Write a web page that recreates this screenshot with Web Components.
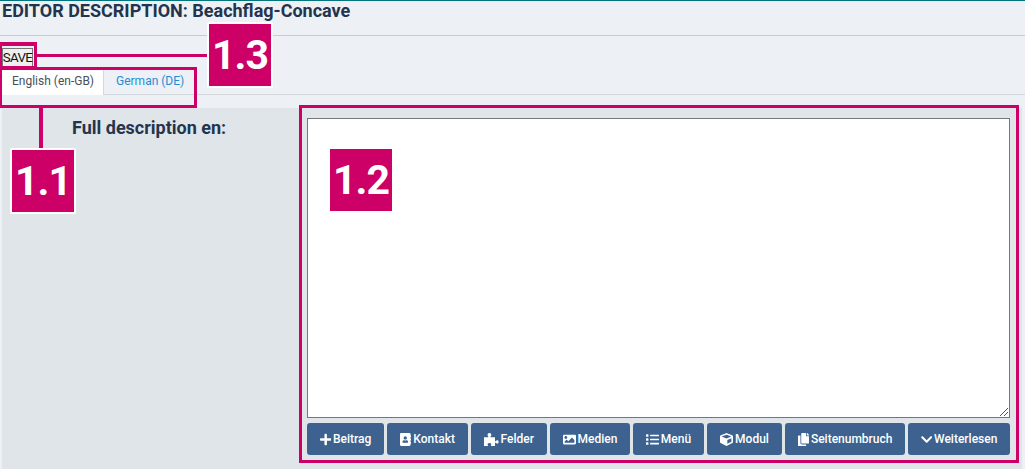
<!DOCTYPE html>
<html>
<head>
<meta charset="utf-8">
<style>
  html, body { margin: 0; height: 469px; overflow: hidden; }
  body { background: #edf1f6; font-family: Roboto, "Liberation Sans", sans-serif; color: #24344d; }
</style>
</head>
<body>
<description-editor>
  <editor-tabs slot="tabs"></editor-tabs>
</description-editor>

<script>
const ICONS = {
  plus: [448, 'M416 208H272V64c0-17.670-14.330-32-32-32h-32c-17.670 0-32 14.330-32 32v144H32c-17.670 0-32 14.330-32 32v32c0 17.670 14.330 32 32 32h144v144c0 17.670 14.330 32 32 32h32c17.670 0 32-14.330 32-32V304h144c17.670 0 32-14.330 32-32v-32c0-17.670-14.330-32-32-32z'],
  contact: [448, 'M436 160c6.600 0 12-5.400 12-12v-40c0-6.600-5.400-12-12-12h-20V48c0-26.500-21.500-48-48-48H48C21.500 0 0 21.500 0 48v416c0 26.500 21.500 48 48 48h320c26.500 0 48-21.500 48-48v-48h20c6.600 0 12-5.400 12-12v-40c0-6.600-5.400-12-12-12h-20v-64h20c6.600 0 12-5.400 12-12v-40c0-6.600-5.400-12-12-12h-20v-64h20zm-228-32c35.300 0 64 28.700 64 64s-28.700 64-64 64-64-28.700-64-64 28.700-64 64-64zm112 236.800c0 10.600-10 19.200-22.400 19.200H118.400C106 384 96 375.400 96 364.800v-19.200c0-31.800 30.100-57.600 67.200-57.600h5c12.300 5.100 25.700 8 39.800 8s27.600-2.900 39.800-8h5c37.100 0 67.200 25.800 67.200 57.600v19.200z'],
  puzzle: [576, 'M0 170H150C190 170 170 130 150 105C120 60 150 0 215 0C280 0 310 60 280 105C260 130 240 170 280 170H432V300C432 340 470 320 490 300C530 270 576 300 576 350C576 400 530 430 490 400C470 380 432 360 432 400V512H300C260 512 270 470 285 450C305 420 280 390 215 390C150 390 125 420 145 450C160 470 170 512 130 512H0Z'],
  image: [512, 'M464 448H48c-26.510 0-48-21.490-48-48V112c0-26.510 21.490-48 48-48h416c26.510 0 48 21.490 48 48v288c0 26.510-21.490 48-48 48zM112 120c-30.928 0-56 25.072-56 56s25.072 56 56 56 56-25.072 56-56-25.072-56-56-56zM64 384h384V272l-87.515-87.515c-4.686-4.686-12.284-4.686-16.971 0L208 320l-55.515-55.515c-4.686-4.686-12.284-4.686-16.971 0L64 336v48z'],
  list: [512, 'M80 368H16a16 16 0 0 0-16 16v64a16 16 0 0 0 16 16h64a16 16 0 0 0 16-16v-64a16 16 0 0 0-16-16zm0-320H16A16 16 0 0 0 0 64v64a16 16 0 0 0 16 16h64a16 16 0 0 0 16-16V64a16 16 0 0 0-16-16zm0 160H16a16 16 0 0 0-16 16v64a16 16 0 0 0 16 16h64a16 16 0 0 0 16-16v-64a16 16 0 0 0-16-16zm416 176H176a16 16 0 0 0-16 16v32a16 16 0 0 0 16 16h320a16 16 0 0 0 16-16v-32a16 16 0 0 0-16-16zm0-320H176a16 16 0 0 0-16 16v32a16 16 0 0 0 16 16h320a16 16 0 0 0 16-16V80a16 16 0 0 0-16-16zm0 160H176a16 16 0 0 0-16 16v32a16 16 0 0 0 16 16h320a16 16 0 0 0 16-16v-32a16 16 0 0 0-16-16z'],
  cube: [512, 'M239.100 6.300l-208 78c-18.700 7-31.100 25-31.100 45v225.100c0 18.200 10.300 34.800 26.500 42.900l208 104c13.500 6.800 29.400 6.800 42.900 0l208-104c16.300-8.100 26.500-24.800 26.500-42.900V129.300c0-20-12.400-37.900-31.100-44.900l-208-78C262 2.200 250 2.200 239.100 6.300zM256 68.400l192 72v1.100l-192 78-192-78v-1.100l192-72zm32 356V275.500l160-65v133.900l-160 80z'],
  copies: [448, 'M320 448v40c0 13.255-10.745 24-24 24H24c-13.255 0-24-10.745-24-24V120c0-13.255 10.745-24 24-24h72v296c0 30.879 25.121 56 56 56h168zm0-344V0H152c-13.255 0-24 10.745-24 24v368c0 13.255 10.745 24 24 24h272c13.255 0 24-10.745 24-24V128H344c-13.200 0-24-10.800-24-24zm120.971-31.029L375.029 7.029A24 24 0 0 0 358.059 0H352v96h96v-6.059a24 24 0 0 0-7.029-16.970z'],
  chevron: [448, 'M207.029 381.476L12.686 187.132c-9.373-9.373-9.373-24.569 0-33.941l22.667-22.667c9.357-9.357 24.522-9.375 33.901-.04L224 284.505l154.745-154.021c9.379-9.335 24.544-9.317 33.901.04l22.667 22.667c9.373 9.373 9.373 24.569 0 33.941L240.971 381.476c-9.373 9.372-24.569 9.372-33.942 0z']
};

class CalloutTag extends HTMLElement {
  constructor() {
    super();
    this.root = this.attachShadow({ mode: 'open' });
    this.root.innerHTML = `
    <style>
      :host {
        display: flex;
        align-items: center;
        justify-content: center;
        box-sizing: border-box;
        width: var(--tag-w, 66px);
        height: var(--tag-h, 66px);
        background: #cc0066;
        color: #fff;
        font: 700 41px/1 Roboto, "Liberation Sans", sans-serif;
        letter-spacing: -1px;
        border: 2px solid var(--tag-edge, #fff);
        border-radius: var(--tag-radius, 2px);
      }
    </style>
    <slot></slot>
    `;
  }
}

class ToolButton extends HTMLElement {
  constructor() {
    super();
    this.root = this.attachShadow({ mode: 'open' });
  }

  connectedCallback() {
    const [w, d] = ICONS[this.getAttribute('icon')];
    this.root.innerHTML = `
    <style>
      :host {
        display: flex;
        align-items: center;
        justify-content: center;
        gap: 2px;
        box-sizing: border-box;
        height: 32px;
        background: #3d6290;
        border-radius: 3px;
        color: #fff;
        font: 500 12px/1 Roboto, "Liberation Sans", sans-serif;
      }
      svg { fill: #fff; flex: none; }
    </style>
    <svg viewBox="0 0 ${w} 512" width="${w * 13 / 512}" height="13"><path d="${d}"/></svg><slot></slot>
    `;
  }
}

class EditorTabs extends HTMLElement {
  constructor() {
    super();
    this.root = this.attachShadow({ mode: 'open' });
    this.root.innerHTML = `
    <style>
      :host {
        display: flex;
        height: 27px;
        box-sizing: border-box;
        border-bottom: 1px solid #d5d9de;
        font: 12px/1 Roboto, "Liberation Sans", sans-serif;
      }
      .tab { display: flex; align-items: center; box-sizing: border-box; height: 26px; }
      .on { width: 104px; height: 27px; padding: 0 0 1px 12px; background: #fff; color: #495057; border-right: 1px solid #d5d9de; }
      .off { padding: 0 0 0 12px; color: #1f8dd6; }
    </style>
    <div class="tab on">English (en-GB)</div>
    <div class="tab off">German (DE)</div>
    `;
  }
}

class DescriptionEditor extends HTMLElement {
  constructor() {
    super();
    this.root = this.attachShadow({ mode: 'open' });
    this.root.innerHTML = `
    <style>
      :host { display: block; position: relative; height: 469px; overflow: hidden; }
      .topline { height: 1px; background: #00757d; }
      h1 {
        margin: 0;
        height: 35px;
        box-sizing: border-box;
        padding: 0 0 0 2px;
        border-bottom: 1px solid #c8ccd0;
        font: 700 18px/20px Roboto, "Liberation Sans", sans-serif;
        color: #24344d;
      }
      .savebar { padding: 12px 0 0 2px; height: 32px; box-sizing: border-box; }
      .save {
        display: flex;
        align-items: center;
        justify-content: center;
        box-sizing: border-box;
        height: 19px;
        width: 31px;
        background: #efefef;
        border: 1px solid #767676;
        font: 13.333px/1 Roboto, "Liberation Sans", sans-serif;
        letter-spacing: -.6px;
        color: #111;
      }
      .tabs { height: 40px; }
      .body {
        display: grid;
        grid-template-columns: 298px 1fr;
        height: 361px;
        width: 1020px;
        background: #e0e5ea;
        margin-left: 2px;
      }
      label {
        display: block;
        padding: 10px 0 0 70px;
        font: 700 18px/20px Roboto, "Liberation Sans", sans-serif;
      }
      .form { padding: 10px 12px 0 7px; }
      .area {
        height: 300px;
        box-sizing: border-box;
        background: #fff;
        border: 1px solid #767676;
        position: relative;
      }
      .grip { position: absolute; right: 1px; bottom: 1px; width: 9px; height: 9px; }
      .tools {
        display: grid;
        grid-template-columns: 77px 81px 76px 80px 71px 75px 120px 102px;
        gap: 3px;
        margin-top: 5px;
      }
      .frame { position: absolute; box-sizing: border-box; border: 3px solid #cc0066; }
      .bar { position: absolute; background: #cc0066; }
      callout-tag { position: absolute; }
    </style>
    <div class="topline"></div>
    <h1>EDITOR DESCRIPTION: Beachflag-Concave</h1>
    <div class="savebar"><div class="save">SAVE</div></div>
    <div class="tabs"><slot name="tabs"></slot></div>
    <div class="body">
      <label>Full description en:</label>
      <div class="form">
        <div class="area">
          <svg class="grip" viewBox="0 0 9 9" fill="none" stroke="#555" stroke-width="1"><path d="M1 9 9 1M5 9l4-4"/></svg>
        </div>
        <div class="tools">
          <tool-button icon="plus">Beitrag</tool-button>
          <tool-button icon="contact">Kontakt</tool-button>
          <tool-button icon="puzzle">Felder</tool-button>
          <tool-button icon="image">Medien</tool-button>
          <tool-button icon="list">Menü</tool-button>
          <tool-button icon="cube">Modul</tool-button>
          <tool-button icon="copies">Seitenumbruch</tool-button>
          <tool-button icon="chevron">Weiterlesen</tool-button>
        </div>
      </div>
    </div>

    <div class="frame" style="left:-1px;top:42px;width:38px;height:27px;border-top-width:4px"></div>
    <div class="frame" style="left:-1px;top:67px;width:198px;height:41px"></div>
    <div class="frame" style="left:299px;top:105px;width:720px;height:358px"></div>
    <div class="bar" style="left:37px;top:54px;width:172px;height:3px"></div>
    <div class="bar" style="left:39px;top:108px;width:4px;height:40px"></div>
    <callout-tag style="left:207px;top:22px">1.3</callout-tag>
    <callout-tag style="left:10px;top:148px">1.1</callout-tag>
    <callout-tag style="left:330px;top:149px;--tag-w:62px;--tag-h:62px;--tag-edge:#cc0066;--tag-radius:0">1.2</callout-tag>
    `;
  }
}

customElements.define('callout-tag', CalloutTag);
customElements.define('tool-button', ToolButton);
customElements.define('editor-tabs', EditorTabs);
customElements.define('description-editor', DescriptionEditor);
</script>
</body>
</html>
